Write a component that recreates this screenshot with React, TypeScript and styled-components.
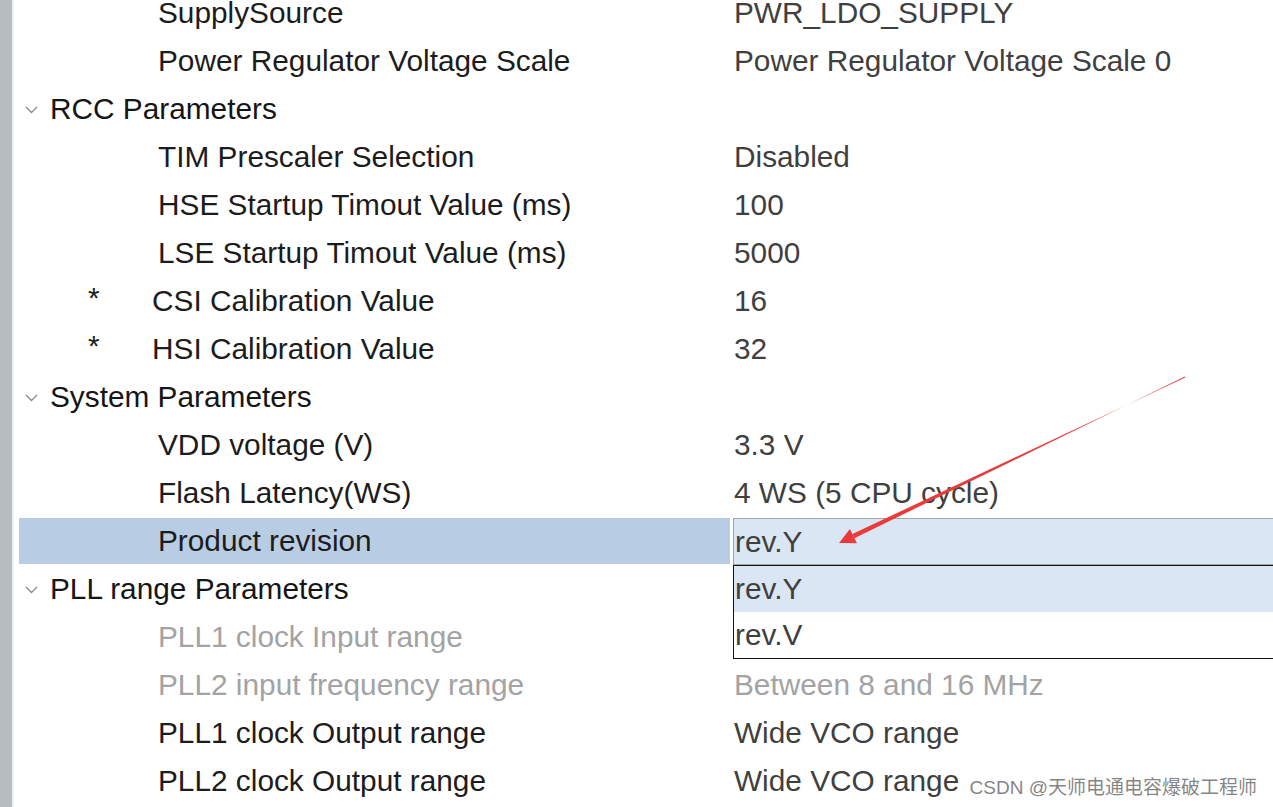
import styled, { createGlobalStyle } from "styled-components";

type Item =
  | { kind: "group"; title: string }
  | {
      kind: "param";
      label: string;
      value?: string;
      star?: boolean;
      disabled?: boolean;
      selected?: boolean;
    };

const items: Item[] = [
  { kind: "param", label: "SupplySource", value: "PWR_LDO_SUPPLY" },
  {
    kind: "param",
    label: "Power Regulator Voltage Scale",
    value: "Power Regulator Voltage Scale 0",
  },
  { kind: "group", title: "RCC Parameters" },
  { kind: "param", label: "TIM Prescaler Selection", value: "Disabled" },
  { kind: "param", label: "HSE Startup Timout Value (ms)", value: "100" },
  { kind: "param", label: "LSE Startup Timout Value (ms)", value: "5000" },
  { kind: "param", label: "CSI Calibration Value", value: "16", star: true },
  { kind: "param", label: "HSI Calibration Value", value: "32", star: true },
  { kind: "group", title: "System Parameters" },
  { kind: "param", label: "VDD voltage (V)", value: "3.3 V" },
  { kind: "param", label: "Flash Latency(WS)", value: "4 WS (5 CPU cycle)" },
  { kind: "param", label: "Product revision", value: "rev.Y", selected: true },
  { kind: "group", title: "PLL range Parameters" },
  { kind: "param", label: "PLL1 clock Input range", disabled: true },
  {
    kind: "param",
    label: "PLL2 input frequency range",
    value: "Between 8 and 16 MHz",
    disabled: true,
  },
  { kind: "param", label: "PLL1 clock Output range", value: "Wide VCO range" },
  { kind: "param", label: "PLL2 clock Output range", value: "Wide VCO range" },
];

const options = ["rev.Y", "rev.V"];

function Chevron() {
  return (
    <svg width="13" height="8" viewBox="0 0 13 8">
      <path d="M1 1 L6.5 6.5 L12 1" fill="none" stroke="#8a8a8a" strokeWidth="1.4" />
    </svg>
  );
}

// red annotation arrow drawn over the screenshot
function Arrow() {
  return (
    <ArrowLayer width="1273" height="807" viewBox="0 0 1273 807">
      <polygon points="854.4,538.2 852.4,534 1185.2,377.4 1184.8,376.6" fill="#ea3b3b" />
      <polygon points="839,543 849.9,528.9 856.9,543.3" fill="#ea3b3b" />
    </ArrowLayer>
  );
}

export default function App() {
  return (
    <>
      <GlobalStyle />
      <Page>
        <Gutter />
        <Tree>
          {items.map((it, i) =>
            it.kind === "group" ? (
              <Row key={i}>
                <GroupCell>
                  <Chevron />
                  <GroupTitle>{it.title}</GroupTitle>
                </GroupCell>
                <div />
              </Row>
            ) : (
              <Row key={i}>
                <LabelCell $selected={it.selected} $indent={it.star ? 69 : 139}>
                  {it.star && <Star>*</Star>}
                  <Label $disabled={it.disabled}>{it.label}</Label>
                </LabelCell>
                {it.selected ? (
                  <EditBox>
                    <Value>{it.value}</Value>
                    <Dropdown>
                      {options.map((o, j) => (
                        <Option key={o} $active={j === 0}>
                          {o}
                        </Option>
                      ))}
                    </Dropdown>
                  </EditBox>
                ) : (
                  <ValueCell>
                    <Value $disabled={it.disabled}>{it.value}</Value>
                  </ValueCell>
                )}
              </Row>
            )
          )}
        </Tree>
        <Arrow />
        <Watermark>CSDN @天师电通电容爆破工程师</Watermark>
      </Page>
    </>
  );
}

const GlobalStyle = createGlobalStyle`
  html, body {
    margin: 0;
    padding: 0;
    background: #ffffff;
    overflow: hidden;
  }
  body {
    font-family: "Liberation Sans", Arial, sans-serif;
  }
`;

const Page = styled.div`
  position: relative;
  display: flex;
  width: 1273px;
  height: 807px;
  overflow: hidden;
  background: #ffffff;
`;

const Gutter = styled.div`
  flex-shrink: 0;
  width: 12px;
  height: 100%;
  background: #b7bcc1;
  border-right: 2px solid #eef1f4;
`;

const Tree = styled.div`
  flex: 1;
  padding-left: 5px;
  margin-top: -11px;
  font-size: 29.8px;
`;

const Row = styled.div`
  display: grid;
  grid-template-columns: 711px 1fr;
  column-gap: 3px;
  height: 48px;
`;

const GroupCell = styled.div`
  display: flex;
  align-items: center;
  padding-left: 6px;
  gap: 12px;
  svg {
    margin-top: 1px;
  }
`;

const GroupTitle = styled.span`
  color: #151515;
  white-space: nowrap;
`;

const LabelCell = styled.div<{ $selected?: boolean; $indent: number }>`
  display: flex;
  align-items: center;
  padding-left: ${(p) => p.$indent}px;
  background: ${(p) => (p.$selected ? "#b8cde4" : "transparent")};
  margin: ${(p) => (p.$selected ? "1px 0" : "0")};
`;

const Star = styled.span`
  width: 64px;
  color: #222222;
  margin-top: -6px;
`;

const Label = styled.span<{ $disabled?: boolean }>`
  color: ${(p) => (p.$disabled ? "#a3a3a3" : "#1c1c1c")};
  white-space: nowrap;
`;

const ValueCell = styled.div`
  display: flex;
  align-items: center;
  padding-left: 1px;
`;

const Value = styled.span<{ $disabled?: boolean }>`
  color: ${(p) => (p.$disabled ? "#a3a3a3" : "#3f3f3f")};
  white-space: nowrap;
`;

const EditBox = styled.div`
  position: relative;
  display: flex;
  align-items: center;
  box-sizing: border-box;
  margin-top: 1px;
  height: 47px;
  width: 600px;
  padding-left: 1px;
  background: #dae6f4;
  border: 1px solid #a5a5a5;
  border-right: none;
`;

const Dropdown = styled.div`
  position: absolute;
  top: 46px;
  left: -1px;
  width: 600px;
  box-sizing: border-box;
  border: 1.5px solid #111111;
  background: #ffffff;
  z-index: 2;
`;

const Option = styled.div<{ $active?: boolean }>`
  height: 46px;
  display: flex;
  align-items: center;
  padding-left: 1px;
  color: #3f3f3f;
  background: ${(p) => (p.$active ? "#dae6f4" : "#ffffff")};
`;

const ArrowLayer = styled.svg`
  position: absolute;
  left: 0;
  top: 0;
  pointer-events: none;
  z-index: 3;
`;

const Watermark = styled.div`
  position: absolute;
  right: 16px;
  bottom: 8px;
  font-family: "Liberation Sans", "Noto Sans CJK SC", sans-serif;
  font-size: 19px;
  color: rgba(110, 110, 110, 0.85);
  white-space: nowrap;
  z-index: 3;
`;
